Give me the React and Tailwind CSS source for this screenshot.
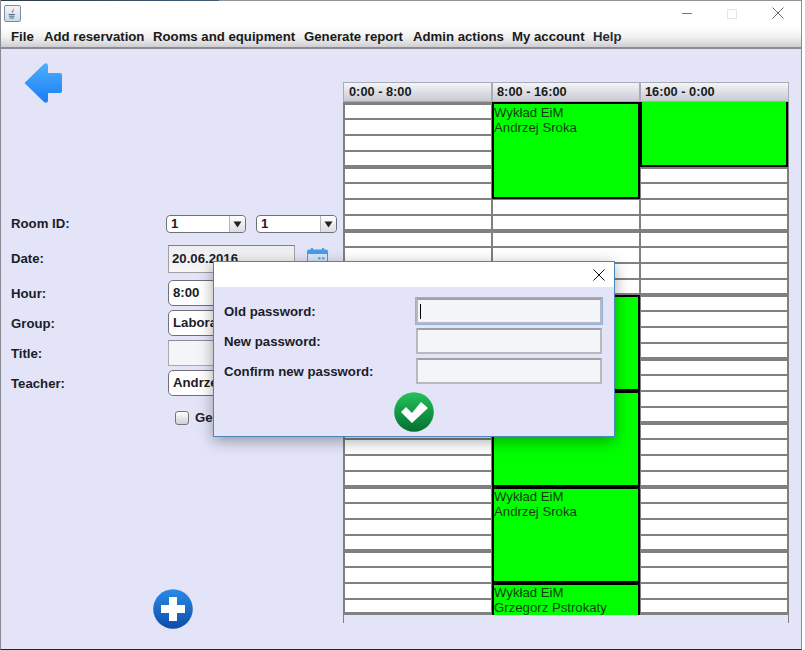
import React from "react";

function Cell({ i }) {
  const top = i % 4 === 0 ? "border-t-[3px]" : "border-t-2";
  const bottom = (i + 1) % 4 === 0 ? "border-b" : "";
  const h = i === 31 ? "h-[15px]" : "h-4";
  return <div className={`${h} shrink-0 bg-white box-border border-x ${top} ${bottom} border-[#808080]`} />;
}

function Rows({ from, to }) {
  const out = [];
  for (let i = from; i <= to; i++) out.push(<Cell key={i} i={i} />);
  return out;
}

function Block({ h, lines, pad }) {
  return (
    <div className={`${h} shrink-0 box-border bg-[#00ff00] border-2 border-black text-[13.2px] leading-[15px] text-[#143c14] overflow-hidden ${pad || ""}`}>
      {lines.map((l) => <div key={l} className="whitespace-nowrap">{l}</div>)}
    </div>
  );
}

function Col({ children }) {
  return <div className="w-[148px] h-[513px] flex flex-col overflow-hidden">{children}</div>;
}

function HeaderCell({ w, pl, children }) {
  return (
    <div className={`${w} ${pl} h-5 box-border border border-[#a9abb5] bg-gradient-to-b from-[#f4f5f9] to-[#c9cad2] text-[12.8px] font-bold leading-[18px] text-[#1a1a1a]`}>
      {children}
    </div>
  );
}

const txt = "text-[13.2px] font-bold text-[#1c1c28]";

function SmallSelect({ w }) {
  return (
    <div className={`${w} h-[18px] box-border border border-[#6f6f78] rounded-[4px] bg-white flex items-center justify-between ${txt} pl-[4px]`}>
      <span>1</span>
      <span className="w-[16px] h-full border-l border-[#b5b5bc] bg-gradient-to-b from-white to-[#dcdce2] rounded-r-[4px] flex items-center justify-center">
        <svg width="9" height="7" viewBox="0 0 9 7"><path d="M0.5 0.5H8.5L4.5 6.5Z" fill="#222" /></svg>
      </span>
    </div>
  );
}

function BigField({ children }) {
  return (
    <div className={`w-[127px] h-[26px] box-border border border-[#70707a] rounded-[5px] bg-white flex items-center pl-[4px] ${txt}`}>
      {children}
    </div>
  );
}

function FormRow({ label, children, mt }) {
  return (
    <div className={`flex items-center pl-[10px] ${mt}`}>
      <span className={`${txt} w-[157px] shrink-0 pt-[2px]`}>{label}</span>
      {children}
    </div>
  );
}

function DlgField({ focus }) {
  return (
    <div className={`w-[186px] h-[26px] box-border border-2 border-[#b9b9bd] border-t-[#a0a0a5] bg-[#f4f5f9] flex items-center pl-[2px] ${focus ? "outline outline-1 outline-[#8fb4dc] border-[#94a6c2]" : ""}`}>
      {focus && <span className="w-px h-[15px] bg-black" />}
    </div>
  );
}

export default function App() {
  return (
    <div className="relative w-[805px] h-[650px] bg-white overflow-hidden" style={{ fontFamily: '"Liberation Sans", Arial, sans-serif' }}>
      <div className="w-[802px] h-[650px] box-border flex flex-col border-x border-[#8b8b93] border-b border-b-[#1c2433]">
        {/* title bar */}
        <div className="h-[27px] shrink-0 bg-white flex items-start border-t border-[#8f9399] relative">
          <div className="absolute left-0 top-[-1px] w-[218px] h-px bg-gradient-to-r from-[#2f3a48] to-[#3f5f78]" />
          <div className="ml-[3px] mt-[4px] w-[17px] h-[17px] box-border border border-[#7c8da0] rounded-[2px] bg-gradient-to-b from-[#f4f6f8] to-[#cfd8e2] flex items-center justify-center">
            <svg width="13" height="13" viewBox="0 0 13 13" fill="none">
              <path d="M7 1C8 3 5 4 6 6.5C6.5 5 9 4 7 1Z" fill="#d9652c" />
              <path d="M2.5 7.5H9M3 9.2H8.5M3.5 11H8" stroke="#4f6f96" strokeWidth="1" />
            </svg>
          </div>
          <div className="ml-auto flex items-start">
            <div className="w-[10px] h-px bg-[#7a7a7a] mt-[12px] mr-[35px]" />
            <div className="w-[10px] h-[10px] border border-[#e4e4e4] mt-[8px] mr-[35px]" />
            <svg className="mt-[6px] mr-[17px]" width="12" height="12" viewBox="0 0 12 12"><path d="M0.5 0.5L11.5 11.5M11.5 0.5L0.5 11.5" stroke="#6e6e6e" strokeWidth="1" /></svg>
          </div>
        </div>
        {/* menu bar */}
        <div className="h-[22px] shrink-0 box-border border-b-2 border-[#8a8c96] bg-gradient-to-b from-white via-[#f1f1f1] to-[#cfcfd3] flex items-center pl-[10px] text-[13.2px] font-bold text-[#191919] whitespace-nowrap">
          <span className="w-[33px]">File</span>
          <span className="w-[109px]">Add reservation</span>
          <span className="w-[151px]">Rooms and equipment</span>
          <span className="w-[109px]">Generate report</span>
          <span className="w-[99px]">Admin actions</span>
          <span className="w-[81px]">My account</span>
          <span className="text-[#2a2a38]">Help</span>
        </div>
        {/* body */}
        <div className="flex-1 flex bg-[#e3e4f8] min-h-0">
          {/* left panel */}
          <div className="w-[342px] shrink-0 flex flex-col">
            <svg className="ml-[23px] mt-[14px] shrink-0" width="38" height="40" viewBox="0 0 38 40">
              <defs>
                <linearGradient id="arr" x1="0" y1="0" x2="0" y2="1">
                  <stop offset="0" stopColor="#4db0fb" />
                  <stop offset="1" stopColor="#1a7cf5" />
                </linearGradient>
              </defs>
              <path d="M0.5 20L20 1Q24 -1 24 3V10H36Q38 10 38 12V28Q38 30 36 30H24V37Q24 41 20 39Z" fill="url(#arr)" />
            </svg>
            <div className="flex items-center mt-[112px] pl-[10px] h-[18px]">
              <span className={`${txt} w-[155px] shrink-0`}>Room ID:</span>
              <SmallSelect w="w-[80px]" />
              <div className="w-[10px]" />
              <SmallSelect w="w-[81px]" />
            </div>
            <div className="flex items-start mt-[12px] pl-[10px] h-[28px]">
              <span className={`${txt} w-[157px] shrink-0 mt-[4px]`}>Date:</span>
              <div className={`w-[127px] h-[28px] box-border border border-[#a0a0a6] border-t-[#808086] bg-gradient-to-b from-[#eeeeef] to-[#f6f6f8] pl-[3px] pt-[3px] ${txt}`}>20.06.2016</div>
              <svg className="ml-[12px] mt-[3px]" width="21" height="18" viewBox="0 0 21 18">
                <rect x="0.5" y="2" width="20" height="15.5" rx="1.5" fill="#d8e8f8" stroke="#4a9be8" />
                <rect x="0.5" y="2" width="20" height="4" fill="#4a9be8" />
                <rect x="4" y="0" width="2" height="4" fill="#4a9be8" />
                <rect x="15" y="0" width="2" height="4" fill="#4a9be8" />
                <rect x="11" y="9" width="2.5" height="2.5" fill="#6aaeea" />
                <rect x="15" y="9" width="2.5" height="2.5" fill="#6aaeea" />
                <rect x="11" y="13" width="2.5" height="2.5" fill="#6aaeea" />
                <rect x="7" y="13" width="2.5" height="2.5" fill="#6aaeea" />
              </svg>
            </div>
            <FormRow label="Hour:" mt="mt-[7px]"><BigField>8:00</BigField></FormRow>
            <FormRow label="Group:" mt="mt-[4px]"><BigField>Laboratorium</BigField></FormRow>
            <FormRow label="Title:" mt="mt-[4px]">
              <div className="w-[127px] h-[26px] box-border border border-[#a9a9ae] border-t-[#8c8c92] bg-[#f4f5f9]" />
            </FormRow>
            <FormRow label="Teacher:" mt="mt-[4px]"><BigField>Andrzej Sroka</BigField></FormRow>
            <div className="flex items-center ml-[174px] mt-[12px] h-[20px]">
              <div className="w-[14px] h-[14px] box-border border border-[#74747c] rounded-[3px] bg-gradient-to-b from-white to-[#cfcfd6]" />
              <span className={`ml-[6px] ${txt}`}>Generate</span>
            </div>
            <svg className="ml-[152px] mt-[161px] shrink-0" width="40" height="40" viewBox="0 0 40 40">
              <defs>
                <linearGradient id="pl" x1="0" y1="0" x2="0" y2="1">
                  <stop offset="0" stopColor="#2b8be8" />
                  <stop offset="1" stopColor="#0d4da8" />
                </linearGradient>
              </defs>
              <circle cx="20" cy="20" r="19.8" fill="url(#pl)" />
              <path d="M16 8H24V16H32V24H24V32H16V24H8V16H16Z" fill="#fff" />
            </svg>
          </div>
          {/* schedule */}
          <div className="pt-[33px] flex flex-col">
            <div className="flex w-[446px]">
              <HeaderCell w="w-[149px]" pl="pl-[5px]">0:00 - 8:00</HeaderCell>
              <HeaderCell w="w-[148px]" pl="pl-[4px]">8:00 - 16:00</HeaderCell>
              <HeaderCell w="w-[149px]" pl="pl-[4px]">16:00 - 0:00</HeaderCell>
            </div>
            <div className="w-[446px] h-[521px] box-border border-x border-[#808080]">
              <div className="flex">
                <Col>
                  <Rows from={0} to={31} />
                  <div className="h-[2px] shrink-0 bg-[#808080]" />
                </Col>
                <Col>
                  <Block h="h-[97px]" pad="pt-px" lines={["Wykład EiM", "Andrzej Sroka"]} />
                  <div className="h-[15px] shrink-0 box-border bg-white border-x border-t border-[#808080]" />
                  <Rows from={7} to={11} />
                  <div className="h-px shrink-0 bg-[#808080]" />
                  <Block h="h-[96px]" lines={["Wykład EiM", "Andrzej Sroka"]} />
                  <Block h="h-[96px]" lines={["Wykład EiM", "Andrzej Sroka"]} />
                  <Block h="h-[96px]" lines={["Wykład EiM", "Andrzej Sroka"]} />
                  <Block h="h-[96px]" lines={["Wykład EiM", "Grzegorz Pstrokaty"]} />
                </Col>
                <Col>
                  <div className="h-[65px] shrink-0 box-border bg-[#00ff00] border-x-2 border-b-2 border-black" />
                  <div className="h-[15px] shrink-0 box-border bg-white border-x border-t-2 border-[#808080]" />
                  <Rows from={5} to={31} />
                  <div className="h-[2px] shrink-0 bg-[#808080]" />
                </Col>
              </div>
            </div>
          </div>
        </div>
      </div>

      {/* dialog */}
      <div className="absolute left-[213px] top-[261px] w-[402px] h-[176px] box-border border border-[#4a86b8] bg-[#e3e4f8] shadow-[0_4px_14px_rgba(0,0,0,0.35)] flex flex-col">
        <div className="h-[25px] shrink-0 bg-white flex items-center justify-end pr-[9px]">
          <svg width="12" height="12" viewBox="0 0 12 12"><path d="M0.5 0.5L11.5 11.5M11.5 0.5L0.5 11.5" stroke="#111" strokeWidth="1" /></svg>
        </div>
        <div className="flex flex-col gap-[4px] pt-[11px] pl-[10px]">
          {[["Old password:", true], ["New password:", false], ["Confirm new password:", false]].map(([l, f]) => (
            <div key={l} className="flex items-center">
              <span className={`w-[192px] shrink-0 pt-[2px] ${txt}`}>{l}</span>
              <DlgField focus={f} />
            </div>
          ))}
        </div>
        <svg className="self-center mt-[8px] shrink-0" width="40" height="40" viewBox="0 0 40 40">
          <defs>
            <linearGradient id="ok" x1="0" y1="0" x2="0" y2="1">
              <stop offset="0" stopColor="#25c25a" />
              <stop offset="1" stopColor="#04702f" />
            </linearGradient>
          </defs>
          <circle cx="20" cy="20" r="19.8" fill="url(#ok)" />
          <path d="M7 20L12 15L18 21L27 10L34 16L18 31Z" fill="#fff" />
        </svg>
      </div>
    </div>
  );
}
